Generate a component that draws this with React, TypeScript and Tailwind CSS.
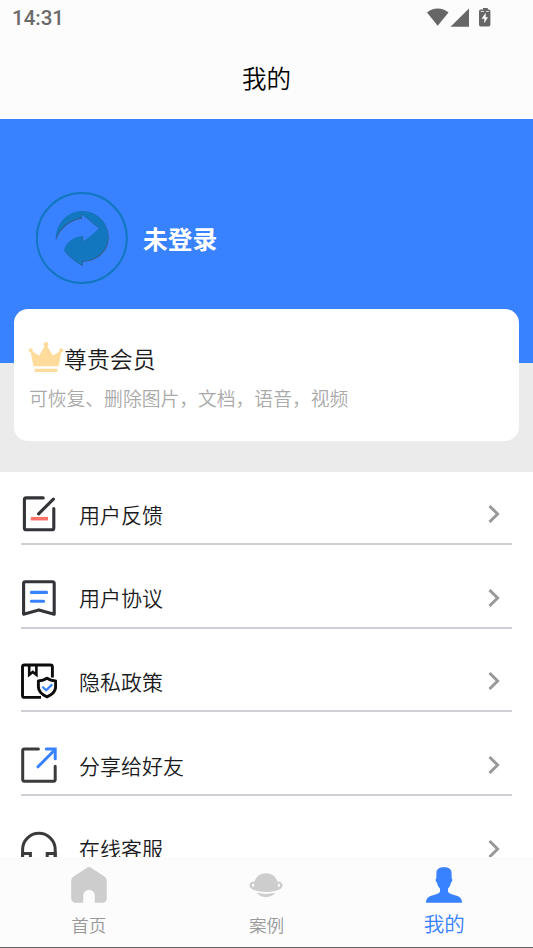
import type { ReactNode } from "react";

type MenuItem = {
  label: string;
  icon: ReactNode;
};

const FeedbackIcon = () => (
  <svg width="36" height="36" viewBox="0 0 36 36" fill="none" strokeWidth="3.1">
    <path d="M22.2 1.9H5.2Q3.4 1.9 3.4 3.7V32Q3.4 33.8 5.2 33.8H31Q32.8 33.8 32.8 32V12.5" stroke="#333437" strokeLinecap="round" />
    <path d="M17.6 17.8L32.4 3.2" stroke="#333437" strokeLinecap="round" />
    <path d="M9.8 22.7H27" stroke="#ff7068" strokeWidth="3.5" />
  </svg>
);

const AgreementIcon = () => (
  <svg width="36" height="36" viewBox="0 0 36 36" fill="none">
    <path d="M2.6 34.2V3.6Q2.6 1.8 4.4 1.8H31.4Q33.2 1.8 33.2 3.6V34.2L17.8 29.9Z" stroke="#333437" strokeWidth="3.1" strokeLinejoin="round" />
    <path d="M10.4 12.4H25.6M10.4 21.2H22.6" stroke="#3881ff" strokeWidth="3.1" strokeLinecap="round" />
  </svg>
);

const PrivacyIcon = () => (
  <svg width="36" height="36" viewBox="0 0 36 36" fill="none" strokeWidth="2.9" strokeLinejoin="round">
    <path d="M20 34.4H3.4Q1.5 34.4 1.5 32.4V4Q1.5 2 3.4 2H29.4Q31.4 2 31.4 4V14.5" stroke="#0c0c0c" />
    <path d="M8.2 2.5V11.8L11.8 9L15.4 11.8V2.5" stroke="#0c0c0c" strokeWidth="2.6" strokeLinejoin="miter" />
    <path d="M26 15.2C23.4 17.2 20.5 17.9 17.4 17.9V24C17.4 28.4 20.6 31.4 26 33.8C31.4 31.4 34.6 28.4 34.6 24V17.9C31.5 17.9 28.6 17.2 26 15.2Z" stroke="#0c0c0c" />
    <path d="M21.4 23.8L25.2 27.3L31.2 21.4" stroke="#3881ff" strokeWidth="2.2" />
  </svg>
);

const ShareIcon = () => (
  <svg width="36" height="36" viewBox="0 0 36 36" fill="none" strokeWidth="3">
    <path d="M17.4 2H3.3Q1.7 2 1.7 3.6V32.6Q1.7 34.2 3.3 34.2H32.8Q34.2 34.2 34.2 32.6V19.2" stroke="#3b3b3d" strokeLinecap="round" />
    <path d="M17 19.8L33.4 3.2" stroke="#3881ff" strokeLinecap="round" />
    <path d="M25.3 2H34.2V11.8" stroke="#3881ff" strokeLinecap="round" />
  </svg>
);

const ServiceIcon = () => (
  <svg width="36" height="36" viewBox="0 0 36 36" fill="none" stroke="#3b3b3d" strokeWidth="3">
    <path d="M1.6 27V18.6A16.3 16.3 0 0 1 34.2 18.6V27" />
    <path d="M1.6 22.4H9.4V32H4Q1.6 32 1.6 29.5ZM34.2 22.4H26.2V32H31.7Q34.2 32 34.2 29.5Z" />
  </svg>
);

const menuItems: MenuItem[] = [
  { label: "用户反馈", icon: <FeedbackIcon /> },
  { label: "用户协议", icon: <AgreementIcon /> },
  { label: "隐私政策", icon: <PrivacyIcon /> },
  { label: "分享给好友", icon: <ShareIcon /> },
  { label: "在线客服", icon: <ServiceIcon /> },
];

const StatusBar = () => (
  <div className="flex h-[36px] items-center justify-between pl-[12px] pr-[40px] text-[#6a6a6a]">
    <span className="font-[Roboto] text-[20.5px] font-medium leading-none">14:31</span>
    <svg width="67" height="20" viewBox="0 0 67 20" fill="#666">
      <path d="M1 4.6C7.2-1 16.2-1 22.5 4.6L11.7 17.8Z" />
      <path d="M43 .4V18.7H24.5Z" />
      <path
        fillRule="evenodd"
        d="M57 0H61.8V1.6H62.6Q64.4 1.6 64.4 3.3V16.8Q64.4 18.5 62.7 18.5H54.7Q53 18.5 53 16.8V3.3Q53 1.6 54.8 1.6H57ZM59.7 4.8L55.6 10.8H58.3V15.3L62 9.2H59.7Z"
      />
      <path d="M54.8 3.5H58M60.2 3.5H62.8" stroke="#fcfcfc" strokeWidth="0.8" />
    </svg>
  </div>
);

const LOGO_PATH =
  "M19.7 48C22 38 33 27.5 45.7 26V22L63 36.3Q56 44 46.7 49.5V44C38 44.8 30.5 49.5 28 58.2Q34 67 46.3 73.5V69.2C61 69 72.2 58.5 72.2 44.7C72.2 30.5 60.5 19 46.3 19C32 19 19.7 30.5 19.7 48Z";

const Avatar = () => (
  <svg width="92" height="92" viewBox="0 0 92 92" fill="none">
    <circle cx="45.8" cy="46" r="45" stroke="#1277be" strokeWidth="2" />
    <path d={LOGO_PATH} fill="#444a5c" transform="translate(.4 .45)" />
    <path d={LOGO_PATH} fill="#1277be" />
  </svg>
);

const CrownIcon = () => (
  <svg className="-ml-px mb-[3px]" width="36" height="32" viewBox="0 0 36 32" fill="#ffdb9c">
    <path d="M2.4 9.5L11.2 14.4L18 3L24.8 14.4L33.6 9.5L30.6 25.2H5.4Z" />
    <circle cx="18" cy="3.2" r="2.3" />
    <circle cx="2.8" cy="9.4" r="2.1" />
    <circle cx="33.2" cy="9.4" r="2.1" />
    <rect x="6.3" y="27.7" width="23.4" height="3.2" rx="1.4" />
  </svg>
);

const HomeIcon = () => (
  <svg width="36" height="36" viewBox="0 0 36 36" fill="#cdcdcd">
    <path d="M15.6.9Q18-.7 20.4.9L33.4 9.6Q35.8 11.2 35.8 14V31Q35.8 35.8 31 35.8H23.8V28.6A5.7 5.7 0 0 0 12.2 28.6V35.8H5Q.2 35.8 .2 31V14Q.2 11.2 2.6 9.6Z" />
  </svg>
);

const PlanetIcon = () => (
  <svg width="36" height="36" viewBox="0 0 36 36" fill="#cdcdcd">
    <path
      fillRule="evenodd"
      d="M6.8 14.2C8.5 9.2 12.4 6.3 18 6.3S27.5 9.2 29.2 14.2C32.8 14.4 34.6 15.9 34.6 18.2C34.6 22.5 27 25 18 25S1.4 22.5 1.4 18.2C1.4 15.9 3.2 14.4 6.8 14.2ZM6.2 16.6C4.6 16.9 3.9 17.4 3.9 18.2C3.9 19.1 4.7 19.7 6 20.1ZM29.8 16.6L30 20.1C31.3 19.7 32.1 19.1 32.1 18.2C32.1 17.4 31.4 16.9 29.8 16.6Z"
    />
    <path d="M8.8 25.8Q18 28.1 27.2 25.8C25.2 28.6 22 30.2 18 30.2S10.8 28.6 8.8 25.8Z" />
  </svg>
);

const ProfileIcon = () => (
  <svg width="36" height="36" viewBox="0 0 36 36" fill="#3881ff">
    <path d="M18 .2C22.8.2 25.6 2.2 25.6 6V11.3C26.8 11.5 26.4 15.1 25 15.5C24.5 18 23.6 20 22 21.7V24.4C23 27.4 28 27.3 32.2 29.3C35 30.7 36 32.8 36 35.8H0C0 32.8 1 30.7 3.8 29.3C8 27.3 13 27.4 14 24.4V21.7C12.4 20 11.5 18 11 15.5C9.6 15.1 9.2 11.5 10.4 11.3V6C10.4 2.2 13.2.2 18 .2Z" />
  </svg>
);

const MenuRow = ({ item }: { item: MenuItem }) => (
  <li className="mb-[23.7px] flex h-[60px] items-center border-b-2 border-[#cfcfd5] pr-[11px]">
    {item.icon}
    <span className="ml-[22px] flex-1 text-[21px] leading-none text-[#1b1b1d]">{item.label}</span>
    <svg width="14" height="20" viewBox="0 0 14 20" fill="none" stroke="#999" strokeWidth="3">
      <path d="M2.5 2L10.6 10L2.5 18" />
    </svg>
  </li>
);

export default function App() {
  return (
    <div className="flex h-[948px] w-[533px] flex-col overflow-hidden bg-white font-['Noto_Sans_CJK_SC',sans-serif] font-[350]">
      {/* Header */}
      <header className="h-[118.5px] shrink-0 bg-[#fcfcfc]">
        <StatusBar />
        <h1 className="pt-[28px] text-center text-[24.5px] leading-[28px] text-black">我的</h1>
      </header>

      {/* Profile */}
      <section className="h-[353px] shrink-0 bg-[#ebebeb]">
        <div className="flex h-[244.5px] items-start bg-[#3881ff] pl-[36px] pt-[73.5px]">
          <Avatar />
          <span className="ml-[15px] mt-[32px] text-[24.8px] font-bold leading-[28px] text-white">未登录</span>
        </div>
        <div className="relative mx-[14px] -mt-[54px] h-[132px] rounded-[14px] bg-white px-[15px] pt-[32px]">
          <div className="flex h-[35px] items-center">
            <CrownIcon />
            <span className="text-[22.9px] leading-none text-[#1b1b1d]">尊贵会员</span>
          </div>
          <p className="mt-[11px] text-[18.8px] leading-[22px] text-[#aaa]">可恢复、删除图片，文档，语音，视频</p>
        </div>
      </section>

      {/* Menu */}
      <main className="min-h-0 flex-1 overflow-hidden pl-[21px] pr-[21px] pt-[13.5px]">
        <ul>
          {menuItems.map((item) => (
            <MenuRow key={item.label} item={item} />
          ))}
        </ul>
      </main>

      {/* Bottom tabs */}
      <nav className="grid h-[91px] shrink-0 grid-cols-3 border-b border-[#666] bg-[#fcfcfc] pt-[10px] text-[17.6px] text-[#999]">
        <div className="flex flex-col items-center">
          <HomeIcon />
          <span className="mt-[11px] leading-[22px]">首页</span>
        </div>
        <div className="flex flex-col items-center">
          <PlanetIcon />
          <span className="mt-[11px] leading-[22px]">案例</span>
        </div>
        <div className="flex flex-col items-center text-[20.5px] text-[#3881ff]">
          <ProfileIcon />
          <span className="mt-[9px] leading-[22px]">我的</span>
        </div>
      </nav>
    </div>
  );
}
